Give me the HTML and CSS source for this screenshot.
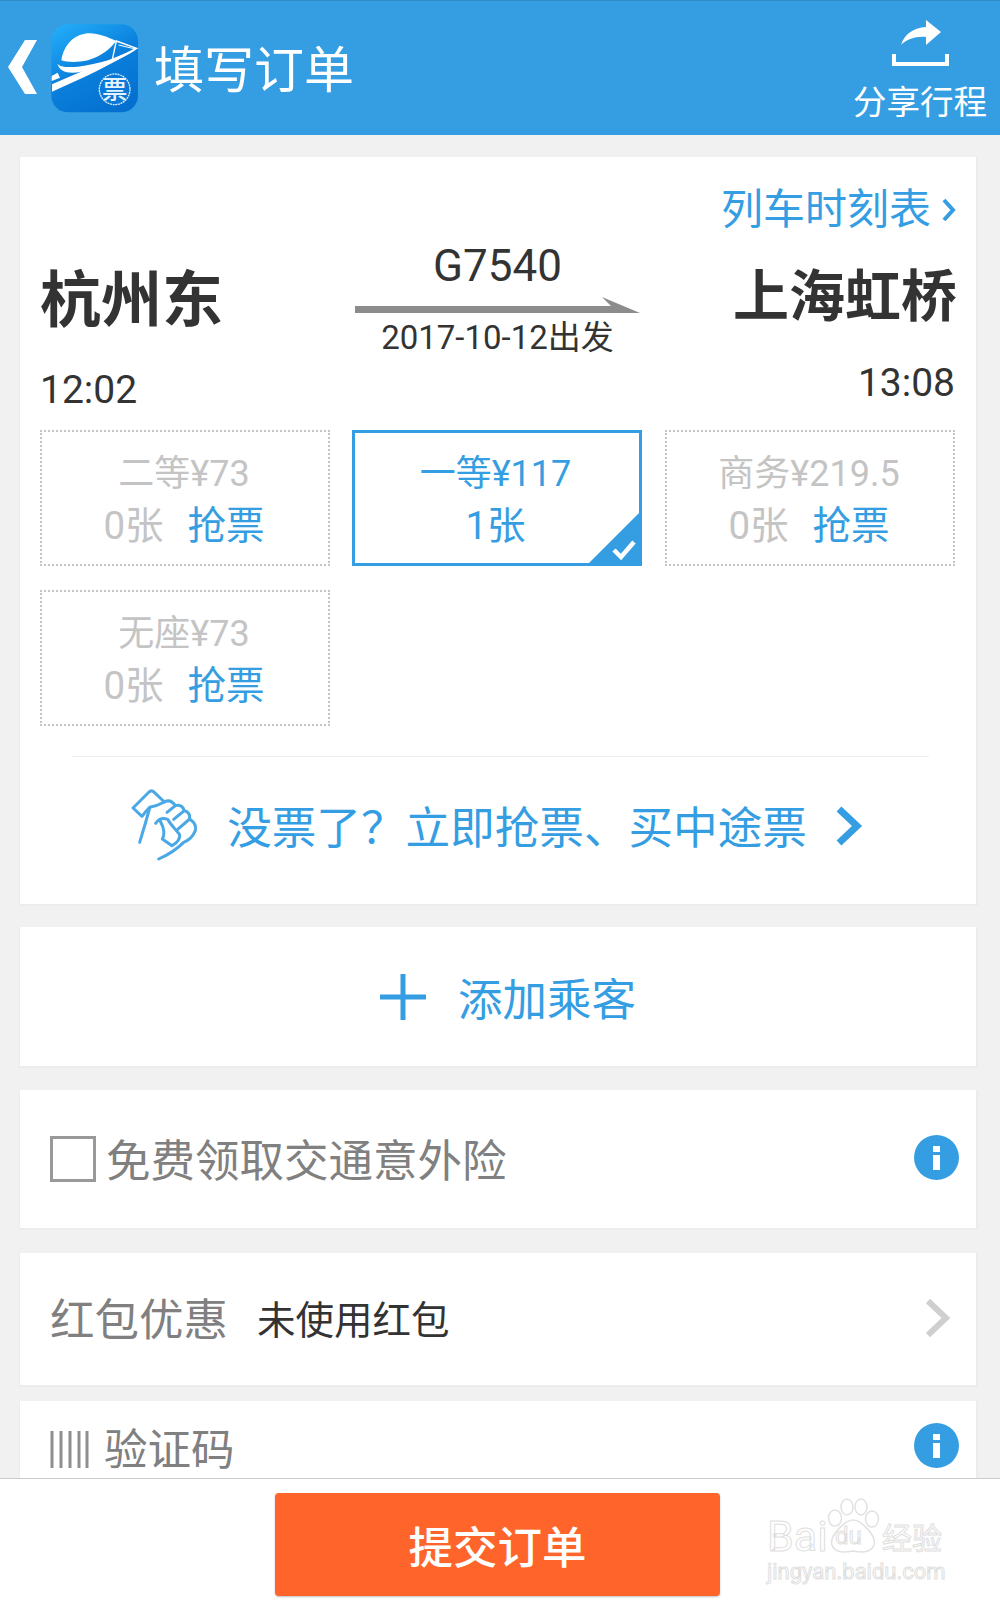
FILE: index.html
```html
<!DOCTYPE html>
<html>
<head>
	<meta charset="UTF-8">
	<title>填写订单</title>
	<link rel="stylesheet" href="styles.css">
</head>
<body>
<div class="page">
	<div class="header">
		<svg class="back" viewBox="0 0 32 56"><polygon points="0,27 17,0 29,0 14,27 29,54 17,54" fill="#fff"/></svg>
		<svg class="logo" viewBox="0 0 282 282">
			<defs>
				<linearGradient id="lg" x1="0.15" y1="0" x2="0.7" y2="1">
					<stop offset="0" stop-color="#22abf8"/>
					<stop offset="0.5" stop-color="#0a80dc"/>
					<stop offset="1" stop-color="#0570d0"/>
				</linearGradient>
			</defs>
			<rect x="10" y="10" width="260" height="264" rx="50" fill="url(#lg)"/>
			<path d="M40 118 C45 80 70 45 110 38 C140 32 175 46 205 60 C185 85 160 105 120 118 C90 124 60 125 40 118 Z" fill="#fff"/>
			<path d="M205 60 L266 82 L192 120 Z" fill="none" stroke="#fff" stroke-width="4"/>
			<path d="M212 72 L262 84 L204 112" fill="none" stroke="#fff" stroke-width="3"/>
			<path d="M28 128 C35 152 60 160 100 152 C160 140 220 115 266 85 C215 110 150 130 90 137 C60 140 35 138 28 128 Z" fill="#fff"/>
			<path d="M12 212 L12 190 C100 152 190 112 266 85 C190 130 100 175 12 212 Z" fill="#fff"/>
			<path d="M11 165 L29 155 L36 170 L11 180 Z" fill="#fff"/>
			<circle cx="200" cy="205" r="46" fill="#0a78d6" stroke="#d6ecfb" stroke-width="4" stroke-dasharray="6 2"/>
			<text class="logo-txt" x="200" y="233" text-anchor="middle">票</text>
		</svg>
		<div class="title">填写订单</div>
		<div class="share">
			<svg class="share-ico" viewBox="0 0 60 50">
				<path d="M11 26 C15 14 24 9 36 8 L36 1 L51 13 L36 26 L36 18 C26 17 17 20 11 26 Z" fill="#fff"/>
				<path d="M4 35 L4 45 L57 45 L57 35" fill="none" stroke="#fff" stroke-width="4"/>
			</svg>
			<div class="share-txt">分享行程</div>
		</div>
	</div>

	<div class="main">
		<div class="card card-train">
			<div class="timetable">列车时刻表<svg class="tt-arrow" viewBox="0 0 16 26"><path d="M3 3 L12 13 L3 23" fill="none" stroke="#359ee2" stroke-width="4"/></svg></div>
			<div class="route">
				<div class="from">
					<div class="station">杭州东</div>
					<div class="time">12:02</div>
				</div>
				<div class="mid">
					<div class="train-no">G7540</div>
					<svg class="route-arrow" viewBox="0 0 285 20"><polygon points="0,10 256,10 247,1 285,17 0,17" fill="#8c8c8c"/></svg>
					<div class="date">2017-10-12出发</div>
				</div>
				<div class="to">
					<div class="station station-to">上海虹桥</div>
					<div class="time">13:08</div>
				</div>
			</div>
			<div class="tickets">
				<div class="ticket">
					<div>二等¥73</div>
					<div>0张<span class="grab">抢票</span></div>
				</div>
				<div class="ticket ticket-on">
					<div>一等¥117</div>
					<div>1张</div>
					<svg class="corner" viewBox="0 0 56 56"><polygon points="56,0 56,56 0,56" fill="#359ee2"/><path d="M28 40 L35 47 L48 32" fill="none" stroke="#fff" stroke-width="4.5"/></svg>
				</div>
				<div class="ticket">
					<div>商务¥219.5</div>
					<div>0张<span class="grab">抢票</span></div>
				</div>
				<div class="ticket">
					<div>无座¥73</div>
					<div>0张<span class="grab">抢票</span></div>
				</div>
			</div>
			<div class="divider"></div>
			<div class="grab-row">
				<svg class="fist" viewBox="0 0 225 240">
					<g fill="none" stroke="#4aa8e6" stroke-width="9" stroke-linecap="round" stroke-linejoin="round">
						<path d="M18 72 L66 24 Q74 17 82 25 L112 54 Q90 66 68 70 Q55 84 45 97 Z"/>
						<path d="M68 72 Q55 120 38 175"/>
						<path d="M112 54 Q130 44 145 65 Q165 60 172 80 Q190 85 188 105 Q210 120 205 140 Q195 165 170 175 Q140 205 95 225"/>
						<path d="M86 118 Q100 98 122 106 Q132 122 140 130 L158 152 Q160 172 135 185 L106 165 Q118 145 100 112"/>
						<path d="M145 65 L120 85 M172 80 L140 106 M188 105 L152 136"/>
					</g>
				</svg>
				<span class="grab-txt">没票了？立即抢票、买中途票</span>
				<svg class="grab-arrow" viewBox="0 0 28 40"><path d="M4 3 L22 20 L4 37" fill="none" stroke="#359ee2" stroke-width="7"/></svg>
			</div>
		</div>

		<div class="card card-add">
			<svg class="plus" viewBox="0 0 46 46"><path d="M23 0 V46 M0 23 H46" stroke="#359ee2" stroke-width="5"/></svg>
			<span class="add-txt">添加乘客</span>
		</div>

		<div class="card card-row card-ins">
			<div class="checkbox"></div>
			<span class="ins-txt">免费领取交通意外险</span>
			<div class="info"><svg viewBox="0 0 45 45"><circle cx="22.5" cy="22.5" r="22.5" fill="#359ee2"/><rect x="19" y="11" width="7" height="6" fill="#fff"/><rect x="19" y="20" width="7" height="15" fill="#fff"/></svg></div>
		</div>

		<div class="card card-row card-red">
			<span class="red-label">红包优惠</span>
			<span class="red-val">未使用红包</span>
			<svg class="chev" viewBox="0 0 26 40"><path d="M3 3 L21 20 L3 37" fill="none" stroke="#cfcfcf" stroke-width="6"/></svg>
		</div>

		<div class="card card-row card-code">
			<svg class="bars" viewBox="0 0 40 38"><path d="M2 0 V37 M11 0 V37 M20 0 V37 M29 0 V37 M37 0 V37" stroke="#8f8f8f" stroke-width="3"/></svg>
			<span class="code-txt">验证码</span>
			<div class="info"><svg viewBox="0 0 45 45"><circle cx="22.5" cy="22.5" r="22.5" fill="#359ee2"/><rect x="19" y="11" width="7" height="6" fill="#fff"/><rect x="19" y="20" width="7" height="15" fill="#fff"/></svg></div>
		</div>
	</div>

	<div class="footer">
		<div class="submit">提交订单</div>
		<div class="mark">
			<svg class="paw" viewBox="0 0 53 57">
				<g fill="#fff" stroke="#e2e2e2" stroke-width="1.5">
					<ellipse cx="8" cy="20" rx="6.5" ry="8"/>
					<ellipse cx="20" cy="9" rx="6" ry="8"/>
					<ellipse cx="34" cy="9" rx="6" ry="8"/>
					<ellipse cx="45" cy="21" rx="6.5" ry="8"/>
					<path d="M26 22 C34 22 50 38 47 47 C44 56 32 54 26 53 C20 54 8 56 5 47 C2 38 18 22 26 22 Z"/>
				</g>
			</svg>
			<div class="mark-top">
				<span class="mark-bai">Bai</span>
				<span class="mark-du">du</span>
				<span class="mark-cn">经验</span>
			</div>
			<div class="mark-url">jingyan.baidu.com</div>
		</div>
	</div>
</div>
</body>
</html>
```
FILE: styles.css
```css
body,div,span{
	padding:0;
	margin:0;
}
body{
	background:#f1f1f1;
	font-family:Roboto,"Noto Sans CJK SC",sans-serif;
	color:#333;
}
.page{
	width:1000px;
	height:1603px;
	display:flex;
	flex-direction:column;
	overflow:hidden;
}

/* header */
.header{
	height:135px;
	flex:none;
	box-sizing:border-box;
	border-top:1px solid #2f8cc9;
	background:#359ee2;
	display:flex;
	align-items:center;
	padding:0 13px 0 8px;
	color:#fff;
}
.back{
	width:32px;
	height:56px;
}
.logo{
	width:94px;
	height:94px;
	margin-left:8px;
}
.logo-txt{
	font-size:76px;
	font-weight:500;
	fill:#e4f3fd;
}
.title{
	font-size:50px;
	margin-left:12px;
	padding-bottom:4px;
	flex:1;
}
.share{
	align-self:flex-start;
	padding-top:18px;
	display:flex;
	flex-direction:column;
	align-items:center;
}
.share-ico{
	width:60px;
	height:50px;
}
.share-txt{
	font-size:33.5px;
	line-height:46px;
	margin-top:11px;
}

.main{
	flex:1;
	min-height:0;
	overflow:hidden;
	padding:22px 22px 0 19px;
}
.card{
	background:#fff;
	border-left:1px solid #ececec;
	border-right:2px solid #ececec;
	border-bottom:2px solid #ececec;
	box-sizing:border-box;
}

/* train card */
.card-train{
	height:749px;
	margin-bottom:21px;
	padding:30px 21px 0 20px;
}
.timetable{
	color:#359ee2;
	font-size:42px;
	line-height:46px;
	display:flex;
	justify-content:flex-end;
	align-items:center;
}
.tt-arrow{
	width:16px;
	height:26px;
	margin-left:10px;
	margin-right:-2px;
}
.route{
	display:grid;
	grid-template-columns:1fr 285px 1fr;
	height:197px;
}
.from{
	padding-top:26px;
}
.to{
	text-align:right;
	padding-top:22px;
	margin-right:-2px;
}
.station{
	font-size:61px;
	font-weight:700;
	line-height:84px;
	color:#333;
	white-space:nowrap;
}
.station-to{
	font-size:56px;
}
.time{
	font-size:39px;
	line-height:50px;
	margin-top:19px;
}
.from .time{
	margin-top:22px;
}
.to .time{
	margin-right:2px;
}
.mid{
	text-align:center;
	margin-top:-1px;
}
.train-no{
	font-size:44px;
	line-height:56px;
	margin-top:6px;
}
.route-arrow{
	display:block;
	width:285px;
	height:20px;
	margin-top:2px;
}
.date{
	font-size:33px;
	line-height:42px;
	margin-top:1px;
}
.tickets{
	display:grid;
	grid-template-columns:290px 290px 290px;
	grid-auto-rows:136px;
	gap:24px 22.5px;
}
.ticket{
	box-sizing:border-box;
	border:2px dotted #c4c4c4;
	color:#c4c4c4;
	font-size:36px;
	line-height:52px;
	text-align:center;
	display:flex;
	flex-direction:column;
	justify-content:center;
	padding:3px 2px 0 0;
	position:relative;
}
.ticket div:last-of-type{
	font-size:38.5px;
}
.grab{
	color:#359ee2;
	margin-left:24px;
}
.ticket-on{
	border:3px solid #359ee2;
	color:#359ee2;
	left:-1px;
}
.corner{
	position:absolute;
	right:-3px;
	bottom:-3px;
	width:56px;
	height:56px;
}
.divider{
	height:1px;
	background:#eee;
	margin:30px 26px 0 32px;
}
.grab-row{
	display:flex;
	justify-content:center;
	align-items:center;
	height:134px;
	padding-right:5px;
	color:#359ee2;
}
.fist{
	width:75px;
	height:80px;
	flex:none;
}
.grab-txt{
	font-size:44.6px;
	margin-left:25px;
}
.grab-arrow{
	width:28px;
	height:40px;
	margin-left:28px;
	margin-top:3px;
}

/* add passenger */
.card-add{
	height:141px;
	margin-bottom:22px;
	padding-left:20px;
	display:flex;
	justify-content:center;
	align-items:center;
}
.plus{
	width:46px;
	height:46px;
}
.add-txt{
	color:#359ee2;
	font-size:44.5px;
	margin-left:32px;
}

/* rows */
.card-row{
	display:flex;
	align-items:center;
	padding:0 17px 0 30px;
}
.card-ins{
	height:140px;
	margin-bottom:23px;
	padding-bottom:3px;
}
.checkbox{
	box-sizing:border-box;
	width:46px;
	height:46px;
	border:3px solid #999;
	flex:none;
	margin-top:3px;
}
.ins-txt{
	font-size:44.5px;
	color:#808080;
	margin-left:10px;
	flex:1;
}
.info{
	width:45px;
	height:45px;
}
.info svg{
	display:block;
	width:45px;
	height:45px;
}
.card-red{
	height:134px;
	margin-bottom:14px;
	padding-bottom:5px;
}
.red-label{
	font-size:44.5px;
	color:#808080;
}
.red-val{
	font-size:38.5px;
	color:#333;
	margin-left:29px;
	flex:1;
}
.chev{
	width:26px;
	height:40px;
	margin-right:8px;
	margin-top:3px;
}
.card-code{
	height:90px;
	align-items:flex-start;
	padding-top:22px;
	border-bottom:0;
	margin:0;
	overflow:hidden;
}
.bars{
	width:40px;
	height:38px;
	margin-top:8px;
}
.code-txt{
	font-size:43.5px;
	line-height:52px;
	color:#808080;
	margin-left:14px;
	padding-top:2px;
	flex:1;
}

/* bottom bar */
.footer{
	height:125px;
	flex:none;
	box-sizing:border-box;
	background:#fff;
	border-top:1px solid #ccc;
	padding:14px 0 0 275px;
	position:relative;
}
.submit{
	width:445px;
	height:103px;
	background:#ff652b;
	border-radius:4px;
	box-shadow:0 1px 2px rgba(0,0,0,.25);
	color:#fff;
	font-size:44.5px;
	font-weight:500;
	line-height:113px;
	text-align:center;
	overflow:hidden;
}

/* watermark */
.mark{
	position:absolute;
	left:767px;
	top:19px;
	width:178px;
	color:#fff;
	-webkit-text-stroke:1px #e0e0e0;
	white-space:nowrap;
}
.paw{
	position:absolute;
	left:60px;
	top:0;
	width:53px;
	height:57px;
}
.mark-top{
	position:relative;
	display:flex;
	align-items:center;
	height:40px;
	margin-top:18px;
}
.mark-bai{
	font-size:43px;
	width:68px;
}
.mark-du{
	font-size:24px;
	width:47px;
}
.mark-cn{
	font-size:30px;
}
.mark-url{
	font-size:22px;
	line-height:28px;
	margin-top:2px;
}
```
